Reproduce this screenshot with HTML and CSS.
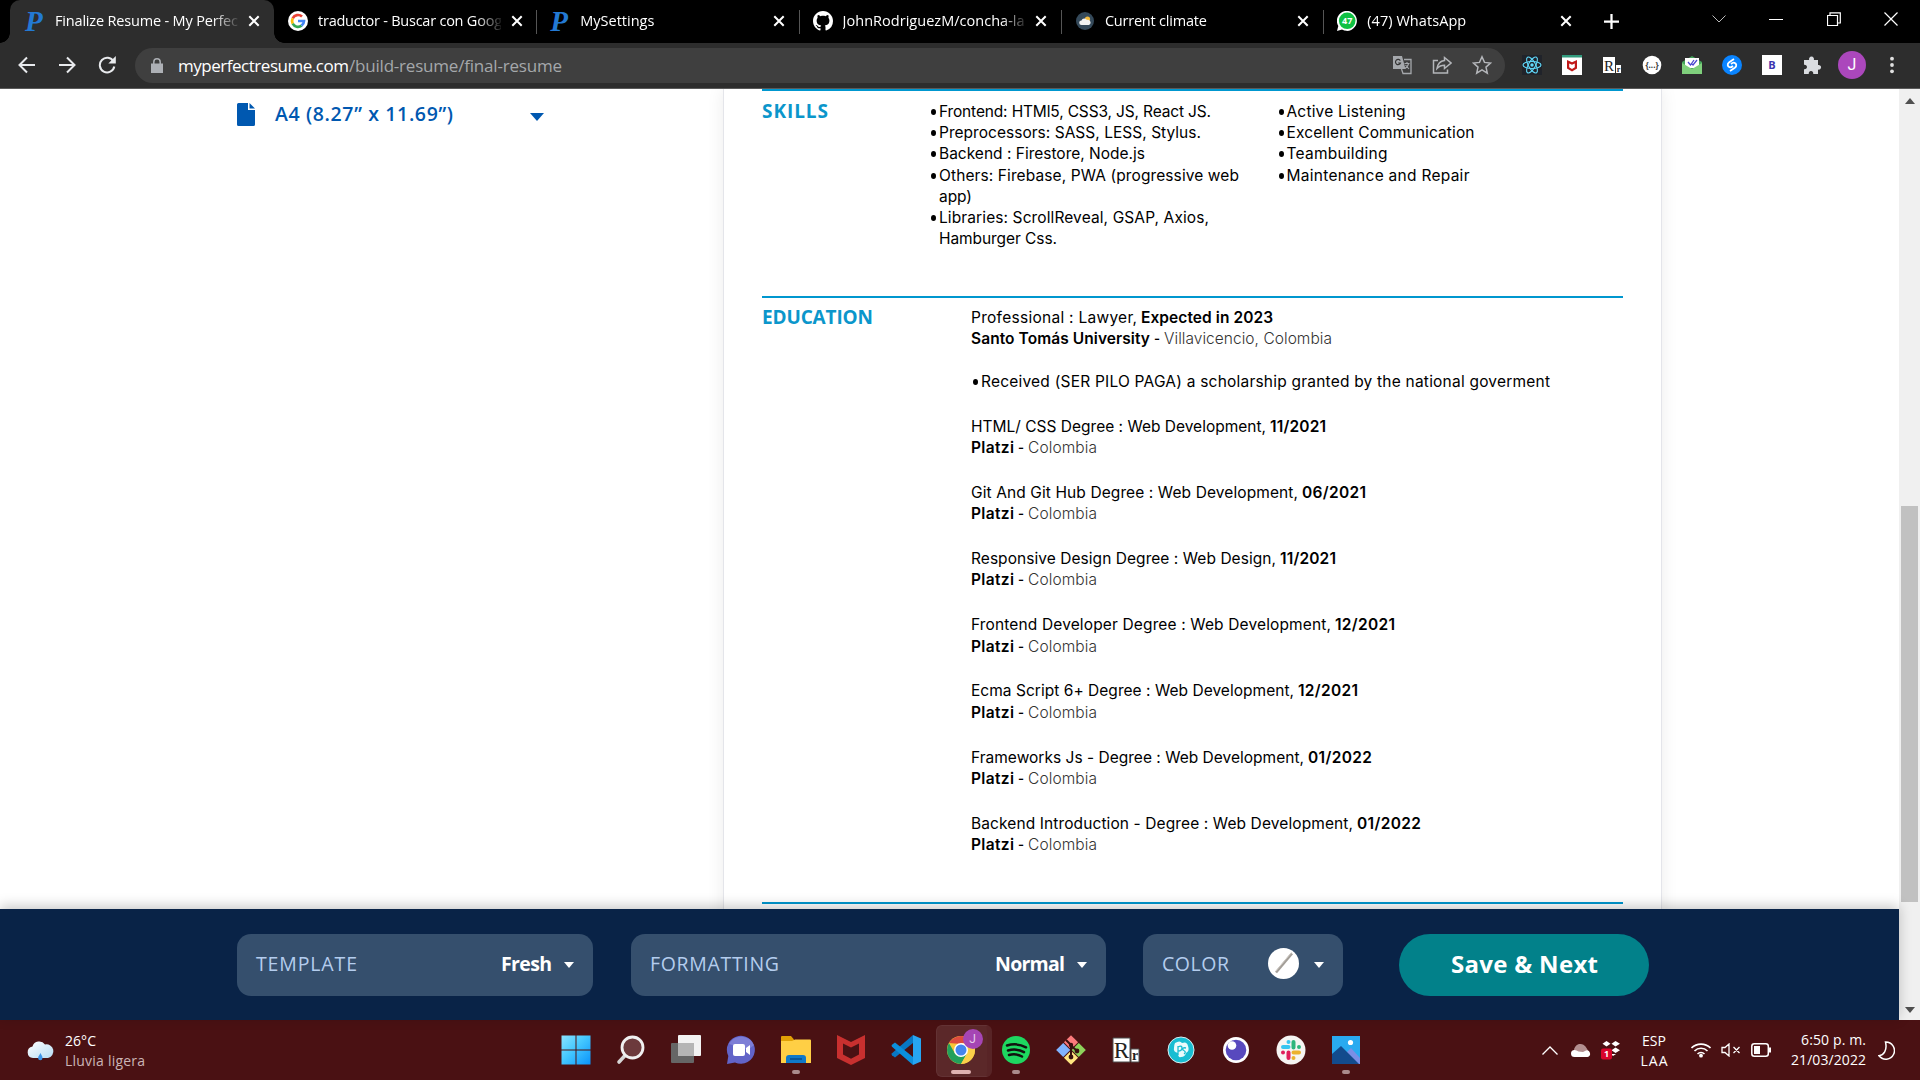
FILE: index.html
```html
<!DOCTYPE html>
<html lang="en">
<head>
<meta charset="utf-8">
<title>Finalize Resume - My Perfect Resume</title>
<link rel="stylesheet" href="styles.css">
</head>
<body>
<svg class="defs" width="0" height="0">
  <symbol id="x" viewBox="0 0 12 12"><path d="M1.3 1.3l9.4 9.4M10.7 1.3L1.3 10.7" stroke="#fff" stroke-width="2" fill="none"/></symbol>
  <symbol id="shield" viewBox="0 0 28 30"><path d="M0 0l14 7L28 0v23l-14 7-14-7zM6 8.500v11l8 4.200 8-4.200v-11l-8 4z" fill="#c8302f" fill-rule="evenodd"/></symbol>
</svg>
<div class="browser">
  <header class="tabs">
    <div class="tab active">
      <span class="fav pfav">P</span><span class="title"><span data-w="183">Finalize Resume - My Perfec</span></span><svg class="close"><use href="#x"/></svg>
    </div>
    <div class="tab nosep">
      <svg class="fav" viewBox="0 0 20 20"><circle cx="10" cy="10" r="10" fill="#fff"/><g fill="none" stroke-width="2.700"><path d="M14 5.500A6 6 0 0 0 4.700 7.300" stroke="#ea4335"/><path d="M4.700 7.300a6 6 0 0 0 0 5.400" stroke="#fbbc05"/><path d="M4.700 12.700A6 6 0 0 0 13.500 14.700" stroke="#34a853"/><path d="M13.500 14.700A6 6 0 0 0 16 10H10" stroke="#4285f4"/></g></svg>
      <span class="title"><span data-w="184">traductor - Buscar con Goog</span></span><svg class="close"><use href="#x"/></svg>
    </div>
    <div class="tab"><span class="fav pfav">P</span><span class="title"><span data-w="74">MySettings</span></span><svg class="close"><use href="#x"/></svg></div>
    <div class="tab">
      <svg class="fav" viewBox="0 0 16 16"><path fill="#fff" d="M8 0C3.580 0 0 3.580 0 8c0 3.540 2.290 6.530 5.470 7.590.4.070.55-.17.55-.38 0-.19-.01-.82-.01-1.490-2.010.37-2.530-.49-2.690-.94-.09-.23-.48-.94-.82-1.130-.28-.15-.68-.52-.01-.53.63-.01 1.080.58 1.230.82.72 1.210 1.870.87 2.330.66.070-.52.28-.87.51-1.070-1.780-.2-3.640-.89-3.640-3.950 0-.87.31-1.590.82-2.150-.08-.2-.36-1.020.08-2.120 0 0 .67-.21 2.200.82.64-.18 1.320-.27 2-.27s1.360.09 2 .27c1.530-1.040 2.200-.82 2.200-.82.44 1.100.16 1.920.08 2.120.51.56.82 1.270.82 2.150 0 3.070-1.870 3.750-3.650 3.950.29.25.54.73.54 1.480 0 1.070-.01 1.930-.01 2.200 0 .21.15.46.55.38A8 8 0 0 0 16 8c0-4.420-3.580-8-8-8z"/></svg>
      <span class="title"><span data-w="182">JohnRodriguezM/concha-la</span></span><svg class="close"><use href="#x"/></svg>
    </div>
    <div class="tab">
      <svg class="fav" viewBox="0 0 20 20"><circle cx="10" cy="10" r="9" fill="#34495a"/><circle cx="12.500" cy="8" r="2.600" fill="#f4bd3f"/><path d="M6.500 14a2.300 2.300 0 0 1 0-4.600 3 3 0 0 1 5.500-.4 2.700 2.700 0 0 1 2 5z" fill="#f2f2f2"/></svg>
      <span class="title"><span data-w="102">Current climate</span></span><svg class="close"><use href="#x"/></svg>
    </div>
    <div class="tab">
      <svg class="fav" viewBox="0 0 20 20"><path d="M0 20l1.300-5A10 10 0 1 1 5 18.600z" fill="#fff"/><circle cx="10.200" cy="9.800" r="8.300" fill="#0fc143"/><text x="10.200" y="13.400" class="wa">47</text></svg>
      <span class="title"><span data-w="99">(47) WhatsApp</span></span><svg class="close"><use href="#x"/></svg>
    </div>
    <svg class="plus" viewBox="0 0 16 16"><path d="M8 0v16M0 8h16" stroke="#fff" stroke-width="2.400"/></svg>
    <div class="winctl">
      <svg width="14" height="8" viewBox="0 0 14 8"><path d="M.5.500L7 7l6.500-6.500" fill="none" stroke="#bbb"/></svg>
      <svg width="14" height="14" viewBox="0 0 14 14"><path d="M0 7.500h14" stroke="#fff"/></svg>
      <svg width="14" height="14" viewBox="0 0 14 14"><path d="M.5 3.500h10v10H.5zM3 3V.800h10.300V11H11" fill="none" stroke="#fff" stroke-width="1.200"/></svg>
      <svg width="14" height="14" viewBox="0 0 14 14"><path d="M.5.500l13 13m0-13l-13 13" stroke="#fff" stroke-width="1.200"/></svg>
    </div>
  </header>
  <div class="toolbar">
    <nav class="nav">
      <svg width="18" height="18" viewBox="0 0 18 18"><path d="M17 9H2M9 1.500L1.500 9 9 16.500"/></svg>
      <svg width="18" height="18" viewBox="0 0 18 18"><path d="M1 9h15M9 1.500L16.500 9 9 16.500"/></svg>
      <svg width="18" height="18" viewBox="0 0 18 18"><path d="M15.500 5.500A7.300 7.300 0 1 0 16.300 10.500"/><path d="M17.800 0v7.500h-7.500z" fill="#e8eaed" stroke="none"/></svg>
    </nav>
    <div class="omnibox">
      <svg width="12" height="15" viewBox="0 0 12 15"><path d="M0 5.500h12V15H0z" fill="#adb0b5"/><path d="M2.800 6V4a3.200 3.200 0 0 1 6.400 0v2" fill="none" stroke="#adb0b5" stroke-width="1.500"/></svg>
      <span class="url"><span class="host" data-w="171">myperfectresume.com</span><span data-w="213">/build-resume/final-resume</span></span>
      <div class="omni-icons">
        <svg width="20" height="20" viewBox="0 0 20 20"><path d="M1 1h9l3.500 13H1z" fill="#a5a8ac"/><path d="M12 4.500h7V18.500h-8L9.500 14" fill="none" stroke="#a5a8ac" stroke-width="1.300"/><path d="M8.300 5.600A2.600 2.600 0 1 0 8.500 8H6.200" fill="none" stroke="#333" stroke-width="1.200"/><path d="M12.500 8.500h5M15 7v1.500M16.500 9c-.5 2-2 3.500-3.500 4.500M13.500 10l3.500 4" fill="none" stroke="#a5a8ac" stroke-width="1.100"/></svg>
        <svg width="20" height="20" viewBox="0 0 20 20"><path d="M6 5.500H1.500v12.500H15.500V14.500" class="ol"/><path d="M12.500 2.500l6.500 5.500-6.500 5.500v-3.200c-3.500 0-5.500 1-7.500 3.200.7-4.500 3.500-7.500 7.500-8z" class="ol"/></svg>
        <svg width="20" height="20" viewBox="0 0 20 20"><path d="M10 1.800l2.500 5.600 6 .6-4.500 4.100 1.300 6-5.300-3.200-5.300 3.200 1.300-6L1.500 8l6-.6z" class="ol"/></svg>
      </div>
    </div>
    <div class="exts">
      <svg viewBox="0 0 20 20"><path fill="#20232a" d="M0 0h20v20H0z"/><g fill="none" stroke="#61dafb" stroke-width="1.100"><ellipse cx="10" cy="10" rx="9" ry="3.500"/><ellipse cx="10" cy="10" rx="9" ry="3.500" transform="rotate(60 10 10)"/><ellipse cx="10" cy="10" rx="9" ry="3.500" transform="rotate(120 10 10)"/></g><circle cx="10" cy="10" r="1.700" fill="#61dafb"/></svg>
      <svg viewBox="0 0 20 20"><path fill="#fff" d="M0 0h20v20H0z"/><path fill="#319b7d" d="M0 0h20v2.500H0z"/><path d="M5 5l5 2.200L15 5v8.500l-5 3-5-3zM7.200 8.500v3.800l2.800 1.600 2.800-1.600V8.500L10 9.800z" fill="#c01818" fill-rule="evenodd"/></svg>
      <svg viewBox="0 0 20 20"><path fill="#fff" d="M1 2h12v16H1zM14 10h5v8h-5z"/><text x="7" y="15.500" class="rr">R</text><text x="16.500" y="17" class="rs">r</text></svg>
      <svg viewBox="0 0 20 20"><circle cx="10" cy="10" r="9.300" fill="#fff"/><text x="10" y="13" class="br">{...}</text></svg>
      <svg viewBox="0 0 20 20"><path d="M0 7l10-6 10 6v11.500H0z" fill="#45a35b"/><path d="M3 3h14v10H3z" fill="#fff"/><path d="M0 8l10 6 10-6v11H0z" fill="#7fcf7c"/><path d="M6 7l2.500 3 3.500-5M10 9l1 1 4-5" fill="none" stroke="#4b46d0" stroke-width="1.300"/></svg>
      <svg viewBox="0 0 20 20"><circle cx="10" cy="10" r="10" fill="#0a84ff"/><path d="M12 4L7.200 7.200c-2.400 1.700-1.600 4.300.3 5 1.300.4 2.300-.2 3.500-1.200M8 16l4.800-3.200c2.400-1.700 1.600-4.300-.3-5-1.300-.4-2.300.2-3.500 1.200" fill="none" stroke="#fff" stroke-width="1.800"/></svg>
      <svg viewBox="0 0 20 20"><path fill="#fff" d="M0 0h20v20H0z"/><text x="10" y="14" class="bb">B</text></svg>
      <svg viewBox="0 0 20 20"><path fill="#dadce0" d="M2 5h5.200a2.500 2.500 0 1 1 4.600 0H16v5a2.400 2.400 0 1 1 0 4.600V19h-4.800a2.300 2.300 0 1 0-4.400 0H2v-4.800a2.300 2.300 0 1 0 0-4.400z"/></svg>
      <span class="avatar">J</span>
      <svg viewBox="0 0 20 20"><g fill="#e0e0e0"><circle cx="10" cy="3.700" r="1.900"/><circle cx="10" cy="10" r="1.900"/><circle cx="10" cy="16.300" r="1.900"/></g></svg>
    </div>
  </div>
  <div class="viewport">
    <main class="page">
      <div class="content">
        <aside class="side">
          <svg width="18" height="23" viewBox="0 0 18 23"><path fill="#0058b0" d="M0 1.500Q0 0 1.500 0H11v7h7v14.500q0 1.500-1.500 1.500h-15Q0 23 0 21.500zM12.500 0L18 5.600h-5.500z"/></svg>
          <span class="size" data-w="178">A4 (8.27” x 11.69”)</span>
          <svg class="caret" width="14" height="8" viewBox="0 0 14 8"><path fill="#0058b0" d="M0 0h14L7 8z"/></svg>
        </aside>
        <article class="sheet">
          <section class="skills">
            <h2><span data-w="66">SKILLS</span></h2>
            <ul>
              <li><span data-w="272">Frontend: HTMl5, CSS3, JS, React JS.</span></li>
              <li><span data-w="262">Preprocessors: SASS, LESS, Stylus.</span></li>
              <li><span data-w="206">Backend : Firestore, Node.js</span></li>
              <li><span data-w="300">Others: Firebase, PWA (progressive web</span><br><span data-w="33">app)</span></li>
              <li><span data-w="270">Libraries: ScrollReveal, GSAP, Axios,</span><br><span data-w="118">Hamburger Css.</span></li>
            </ul>
            <ul>
              <li><span data-w="119">Active Listening</span></li>
              <li><span data-w="188">Excellent Communication</span></li>
              <li><span data-w="101">Teambuilding</span></li>
              <li><span data-w="183">Maintenance and Repair</span></li>
            </ul>
          </section>
          <section class="education">
            <h2><span data-w="111">EDUCATION</span></h2>
            <div class="entries">
              <div class="entry">
                <p><span data-w="166">Professional : Lawyer,</span> <b data-w="132">Expected in 2023</b></p>
                <p><b data-w="179">Santo Tomás University</b> <b class="dash">-</b> <i data-w="168">Villavicencio, Colombia</i></p>
                <ul><li><span data-w="569">Received (SER PILO PAGA) a scholarship granted by the national goverment</span></li></ul>
              </div>
              <div class="entry"><p><span data-w="295">HTML/ CSS Degree : Web Development,</span> <b data-w="56">11/2021</b></p><p><b data-w="43">Platzi</b> <b class="dash">-</b> <i data-w="69">Colombia</i></p></div>
              <div class="entry"><p><span data-w="327">Git And Git Hub Degree : Web Development,</span> <b data-w="64">06/2021</b></p><p><b data-w="43">Platzi</b> <b class="dash">-</b> <i data-w="69">Colombia</i></p></div>
              <div class="entry"><p><span data-w="305">Responsive Design Degree : Web Design,</span> <b data-w="56">11/2021</b></p><p><b data-w="43">Platzi</b> <b class="dash">-</b> <i data-w="69">Colombia</i></p></div>
              <div class="entry"><p><span data-w="360">Frontend Developer Degree : Web Development,</span> <b data-w="60">12/2021</b></p><p><b data-w="43">Platzi</b> <b class="dash">-</b> <i data-w="69">Colombia</i></p></div>
              <div class="entry"><p><span data-w="323">Ecma Script 6+ Degree : Web Development,</span> <b data-w="60">12/2021</b></p><p><b data-w="43">Platzi</b> <b class="dash">-</b> <i data-w="69">Colombia</i></p></div>
              <div class="entry"><p><span data-w="333">Frameworks Js - Degree : Web Development,</span> <b data-w="64">01/2022</b></p><p><b data-w="43">Platzi</b> <b class="dash">-</b> <i data-w="69">Colombia</i></p></div>
              <div class="entry"><p><span data-w="382">Backend Introduction - Degree : Web Development,</span> <b data-w="64">01/2022</b></p><p><b data-w="43">Platzi</b> <b class="dash">-</b> <i data-w="69">Colombia</i></p></div>
            </div>
          </section>
          <section></section>
        </article>
      </div>
      <footer class="actions">
        <div class="pill template"><label><span data-w="101">TEMPLATE</span></label><strong><span data-w="51">Fresh</span></strong><svg class="tri" viewBox="0 0 10 6"><path d="M0 0h10L5 6z"/></svg></div>
        <div class="pill formatting"><label><span data-w="129">FORMATTING</span></label><strong><span data-w="70">Normal</span></strong><svg class="tri" viewBox="0 0 10 6"><path d="M0 0h10L5 6z"/></svg></div>
        <div class="pill color"><label><span data-w="67">COLOR</span></label><svg class="swatch" viewBox="0 0 31 31"><circle cx="15.500" cy="15.500" r="15.500" fill="#fff"/><path d="M8 24.500L24 5.500" stroke="#a39e98" stroke-width="2.600"/><path d="M7.500 23.500L23.500 4.500" stroke="#cfcac4"/></svg><svg class="tri" viewBox="0 0 10 6"><path d="M0 0h10L5 6z"/></svg></div>
        <button class="save"><span data-w="147">Save &amp; Next</span></button>
      </footer>
    </main>
    <div class="scroll">
      <svg width="10" height="6" viewBox="0 0 10 6"><path d="M0 6h10L5 0z" fill="#505050"/></svg>
      <div class="thumb"></div>
      <svg width="10" height="6" viewBox="0 0 10 6"><path d="M0 0h10L5 6z" fill="#505050"/></svg>
    </div>
  </div>
</div>
<div class="taskbar">
  <div class="weather">
    <svg width="28" height="22" viewBox="0 0 28 22"><defs><linearGradient id="cl" x2="1" y2="1"><stop stop-color="#fff"/><stop offset="1" stop-color="#b5dcf4"/></linearGradient></defs><path d="M6 18a5.800 5.800 0 0 1-.5-11.500A7 7 0 0 1 18 4.500a6.800 6.800 0 1 1 3 13.500z" fill="url(#cl)"/><path d="M13.500 13c1 2 2 3.500 2 5a2.200 2.200 0 0 1-4.400 0c0-1.500 1.400-3 2.400-5z" fill="#3d94e8"/></svg>
    <div><div data-w="31">26°C</div><div class="dim" data-w="80">Lluvia ligera</div></div>
  </div>
  <div class="apps">
    <div class="app"><svg viewBox="0 0 30 30"><defs><linearGradient id="wn" x2="1" y2="1"><stop stop-color="#8be3ff"/><stop offset=".45" stop-color="#45c8ff"/><stop offset="1" stop-color="#0a93fa"/></linearGradient></defs><path fill="url(#wn)" d="M.5.500h14v14H.5zM15.500.500h14v14h-14zM.5 15.500h14v14H.5zM15.500 15.500h14v14h-14z"/></svg></div>
    <div class="app"><svg viewBox="0 0 30 30"><path d="M9.500 20L3 27" stroke="#d6d6d6" stroke-width="3.600" stroke-linecap="round"/><circle cx="16.500" cy="12.500" r="10.500" fill="#6c3a3c" stroke="#f0f0f0" stroke-width="2.800"/></svg></div>
    <div class="app"><svg viewBox="0 0 30 30"><rect y="8" width="23" height="20" rx="1" fill="#666"/><rect x="7" y="0" width="23" height="21" rx="1" fill="#f2f2f2"/><path d="M7 8h16v13H7z" fill="#b5b5b5"/></svg></div>
    <div class="app"><svg viewBox="0 0 30 30"><path d="M1 29l1.300-8A14 14 0 1 1 9 27.500z" fill="#6264c8"/><path d="M3 9A14 14 0 0 1 28 10l-6 5z" fill="#8f8fe0" opacity=".6"/><rect x="7" y="9" width="12" height="12" rx="2" fill="#fff"/><path d="M20 13l4-3v10l-4-3z" fill="#fff"/></svg></div>
    <div class="app open"><svg viewBox="0 0 30 30"><path d="M0 2q0-1 1-1h9l3 3.500V9H0z" fill="#e0a106"/><path d="M0 6h11l3-1.500h15q1 0 1 1V28H0z" fill="#ffcf45"/><path d="M5 28v-5q0-3 3-3h14q3 0 3 3v5z" fill="#0f79c9"/><path d="M9 24h12" stroke="#064c8d" stroke-width="1.500"/></svg></div>
    <div class="app"><svg viewBox="-1 0 30 30"><use href="#shield" width="28" height="30"/></svg></div>
    <div class="app"><svg viewBox="0 0 30 30"><path d="M22 0v8L4 22.500l-3-2.300q-1-1 0-2z" fill="#0877c4"/><path d="M22 30v-8L4 7.500 1 9.800q-1 1 0 2z" fill="#0b8fdc"/><path d="M22 0l8 3.500v23L22 30z" fill="#27a5f2"/></svg></div>
    <div class="app open current"><svg viewBox="0 0 30 30"><circle cx="15" cy="15" r="14" fill="#f9c637"/><path d="M2.900 8A14 14 0 0 1 27.100 8L15 9z" fill="#dd4b3e"/><path d="M2.900 8A14 14 0 0 0 15 29l6-10.500-12 0z" fill="#22a05b"/><path d="M15 8h12.100a14 14 0 0 1-12.100 21l6-10.500z" fill="#fbd04a"/><circle cx="15" cy="15" r="7" fill="#fff"/><circle cx="15" cy="15" r="5.500" fill="#4485ee"/></svg><span class="badge">J</span></div>
    <div class="app open"><svg viewBox="0 0 30 30"><circle cx="15" cy="15" r="14" fill="#1ed760"/><path d="M6 10.500q10-3 19 1.800M7 15.500q8.500-2.500 16 1.700M8 20q7-2 13 1.500" fill="none" stroke="#11120f" stroke-width="2.500" stroke-linecap="round"/></svg></div>
    <div class="app"><svg viewBox="0 0 30 30"><g transform="rotate(45 15 15)"><path fill="#fb7a7c" d="M4.500 4.500h10v10h-10z"/><path fill="#80b3ff" d="M4.500 15.500h10v10h-10z"/><path fill="#8ed35b" d="M15.500 4.500h10v10h-10z"/><path fill="#ffe680" d="M15.500 15.500h10v10h-10z"/></g><path d="M10 5l5 5v12M15 10.500l6 5.500" fill="none" stroke="#381010" stroke-width="2"/><g fill="#381010"><circle cx="15" cy="10" r="2.200"/><circle cx="15" cy="22" r="2.400"/><circle cx="21" cy="16" r="2.400"/></g></svg></div>
    <div class="app"><svg viewBox="0 0 30 30"><path fill="#fff" stroke="#4d4d4d" d="M2 3h17v24H2zM20 14h8v13h-8z"/><text x="10.500" y="23" class="rr big">R</text><text x="24" y="25" class="rs big">r</text></svg></div>
    <div class="app"><svg viewBox="0 0 30 30"><circle cx="15" cy="15" r="13" fill="#18bdd2" stroke="#dceff1"/><path d="M9 8q5-3 7 0 5-2 6 3 2 5-2 7-1 4-5 4-3 1-3-4-5-1-4-5 0-3 1-5z" fill="#eafafb"/><path d="M12 11v9M12 12q4-2 4 1t-4 3M20 13q-4-1-3 2 4 2 1 4" fill="none" stroke="#18bdd2" stroke-width="1.300"/></svg></div>
    <div class="app"><svg viewBox="0 0 30 30"><circle cx="15" cy="15" r="13" fill="#fff"/><circle cx="15" cy="15" r="10.300" fill="#5849be"/><circle cx="11" cy="10.500" r="4.300" fill="#fff"/></svg></div>
    <div class="app"><svg viewBox="0 0 30 30"><circle cx="15" cy="15" r="14.500" fill="#f6f5f3"/><g stroke-width="4" stroke-linecap="round" fill="none"><path d="M7 12h5.500M12.500 7v0" stroke="#36c5f0"/><path d="M17.500 7v5.500M23 12h0" stroke="#2eb67d"/><path d="M17.500 17.500H23M17.500 23v0" stroke="#ecb22e"/><path d="M12.500 17.500V23M7 17.500h0" stroke="#e01e5a"/></g></svg></div>
    <div class="app open"><svg viewBox="0 0 30 30"><path fill="#29aaf0" d="M1 1h28v28H1z"/><path d="M16 17l4-4 9 10v6H16z" fill="#7a8fe6"/><path d="M1 19l9-8 18 18H1z" fill="#134b8d"/><circle cx="19.500" cy="7.500" r="2.600" fill="#fff"/></svg></div>
  </div>
  <div class="tray">
    <svg class="t-chev" width="16" height="9" viewBox="0 0 16 9"><path d="M.5 8.500L8 1l7.500 7.500" fill="none" stroke="#fff" stroke-width="1.300"/></svg>
    <svg class="t-cloud" width="20" height="14" viewBox="0 0 20 14"><path d="M3 8a6.500 6.500 0 0 1 12.500-3l3 5H2z" fill="#b38f90"/><path d="M3.500 14a3.500 3.500 0 0 1 0-7q2 0 4 1.500L12 9l3-1.500a3.300 3.300 0 0 1 1.500 6.500z" fill="#fff"/></svg>
    <svg class="t-drop" width="20" height="20" viewBox="0 0 20 20"><path d="M5.500 1l4 2.700-4 2.700-4-2.700zM14.500 1l4.500 2.700-4.500 2.700-4-2.700zM14.500 7.500l4.500 2.700-4.500 2.700-4-2.700zM10 14h5l-3 2z" fill="#fff"/><rect y="8.500" width="11" height="11" rx="2" fill="#d9042b"/><text x="5.500" y="17.300" class="one">1</text></svg>
    <div class="lang"><div data-w="24">ESP</div><div data-w="27">LAA</div></div>
    <svg class="t-wifi" width="20" height="16" viewBox="0 0 20 16"><g fill="none" stroke="#fff" stroke-width="1.600"><path d="M.5 6a13.500 13.500 0 0 1 19 0M3.500 9a9.200 9.200 0 0 1 13 0M6.500 12a5 5 0 0 1 7 0"/></g><circle cx="10" cy="13.700" r="1.900" fill="#fff"/></svg>
    <svg class="t-vol" width="20" height="14" viewBox="0 0 20 14"><path d="M1 4.500h3L8 1v12L4 9.500H1zM12.500 4l6 6M18.500 4l-6 6" fill="none" stroke="#fff" stroke-width="1.300"/></svg>
    <svg class="t-bat" width="20" height="14" viewBox="0 0 20 14"><rect x=".8" y=".8" width="16.500" height="12.400" rx="2.500" fill="none" stroke="#fff" stroke-width="1.500"/><path d="M3 3h6v8H3zM18 4.500h2v5h-2z" fill="#fff"/></svg>
    <div class="clock"><div data-w="65">6:50 p. m.</div><div data-w="75">21/03/2022</div></div>
    <svg class="t-moon" width="17" height="19" viewBox="0 0 17 19"><path d="M7.500 1A8.600 8.600 0 1 1 1 14.800C5.500 14.500 9.500 9.500 7.500 1z" fill="none" stroke="#fff" stroke-width="1.500"/></svg>
  </div>
</div>
<script src="fit.js"></script>
</body>
</html>
```
FILE: styles.css
```css
* { box-sizing: border-box; }
body { margin: 0; width: 1920px; height: 1080px; overflow: hidden; background: #fff; font-family: "Open Sans", "Noto Sans", sans-serif; }
svg { display: block; flex: none; }
.defs { position: absolute; }
[data-w] { white-space: nowrap; }

.browser { height: 1020px; display: flex; flex-direction: column; }
.tabs { height: 43px; background: #000; display: flex; align-items: center; padding-left: 10px; flex: none; }
.tab { position: relative; width: 262.3px; height: 43px; display: flex; align-items: center; padding: 0 14px 2px 14px; color: #fff; font-size: 14.5px; flex: none; }
.tab:not(.active):not(.nosep)::before { content: ""; position: absolute; left: 0; top: 10px; width: 1px; height: 24px; background: #555; }
.tab.active { width: 264px; background: #2d2d2d; border-radius: 10px 10px 0 0; padding-left: 15px; }
.tab.active::before, .tab.active::after { content: ""; position: absolute; bottom: 0; width: 10px; height: 10px; }
.tab.active::before { left: -10px; background: radial-gradient(circle at 0 0, #000 9.500px, #2d2d2d 10px); }
.tab.active::after { right: -10px; background: radial-gradient(circle at 100% 0, #000 9.500px, #2d2d2d 10px); }
.fav { width: 20px; height: 20px; margin-right: 10px; flex: none; }
.pfav { font: italic bold 29px/20px "Liberation Serif", serif; color: #2379d3; }
.title { width: 183px; overflow: hidden; white-space: nowrap; margin-right: 9.500px; flex: none; -webkit-mask-image: linear-gradient(90deg, #000 158px, transparent 186px); mask-image: linear-gradient(90deg, #000 158px, transparent 186px); }
.close { width: 12px; height: 12px; }
.plus { width: 15px; height: 15px; margin-left: 19px; }
.winctl { margin-left: auto; padding: 0 22px 5px 0; display: flex; align-items: center; gap: 43.500px; }
.wa { font: bold 9px "Open Sans", sans-serif; fill: #fff; text-anchor: middle; }

.toolbar { height: 46px; background: #2d2d2d; border-bottom: 1px solid #5a5a5a; display: flex; align-items: center; flex: none; padding: 0 0 1px 18px; }
.nav { display: flex; gap: 22px; width: 117px; }
.nav svg { fill: none; stroke: #e8eaed; stroke-width: 2; }
.omnibox { width: 1370px; height: 35px; border-radius: 18px; background: #3f3f3f; display: flex; align-items: center; padding: 0 13px 0 16px; }
.url { margin-left: 15px; font-size: 17px; color: #a5a8ab; display: flex; }
.host { color: #fff; }
.omni-icons { margin-left: auto; display: flex; gap: 20px; }
.ol { fill: none; stroke: #b4b6ba; stroke-width: 1.500; }
.exts { display: flex; align-items: center; gap: 20px; padding-left: 17px; }
.exts > svg { width: 20px; height: 20px; }
.avatar { width: 28px; height: 28px; margin: 0 -4px; border-radius: 50%; background: #ab47bc; color: #fff; font: 16px/28px Roboto, sans-serif; text-align: center; }
.rr { font: 15px "Liberation Serif", serif; fill: #222; text-anchor: middle; }
.rs { font: bold 8px "Liberation Serif", serif; fill: #222; text-anchor: middle; }
.rr.big { font-size: 23px; }
.rs.big { font-size: 14px; }
.br { font: bold 8px "Open Sans", sans-serif; fill: #333; text-anchor: middle; }
.bb { font: bold 11px "Open Sans", sans-serif; fill: #3b35b0; text-anchor: middle; }

.viewport { height: 931px; display: flex; }
.page { width: 1899px; display: flex; flex-direction: column; }
.content { height: 820px; overflow: hidden; display: flex; }
.side { width: 723px; height: 50px; display: flex; align-items: center; padding-left: 237px; color: #0058b0; font-size: 19.500px; font-weight: 600; }
.size { width: 256px; margin: -2px 0 0 20px; }
.side .caret { margin-top: 5px; }
.sheet { width: 939px; height: 840px; padding-left: 38px; border: solid #e4e5ea; border-width: 0 1px; box-shadow: 0 0 16px rgba(0,0,0,.08); color: #000; font: 15.500px/21.170px "Inter", sans-serif; flex: none; }
.sheet section { width: 861px; border-top: 2px solid #0097cf; display: flex; }
.sheet h2 { margin: 0; font: 700 19px/21px "Open Sans", sans-serif; color: #0b96cb; flex: none; }
.skills { height: 207px; padding-top: 10px; }
.skills h2 { width: 177px; }
.skills ul { width: 347.500px; flex: none; }
.education { height: 606px; padding-top: 9px; }
.education h2 { width: 209px; }
ul { list-style: none; margin: 0; padding: 0; }
li { position: relative; }
li::before { content: ""; position: absolute; left: -8px; top: 8px; width: 5px; height: 6px; border-radius: 50%; background: #000; }
.entry { margin-bottom: 23.800px; }
.entry p { margin: 0; display: flex; gap: 4px; white-space: nowrap; }
.entry ul { margin-top: 21.600px; padding-left: 10px; }
.entry b { font-weight: 600; }
.entry .dash { width: 6px; font-size: 13px; }
.entry i { font-style: normal; font-weight: 300; color: #333; }

.actions { position: relative; height: 111px; background: #092347; box-shadow: 0 -3px 12px rgba(0,0,0,.22); display: flex; align-items: center; padding: 1px 0 0 237px; }
.pill { height: 62px; border-radius: 14px; background: #354f6d; display: flex; align-items: center; padding: 0 19px 3px; font-size: 19.500px; flex: none; }
.pill label { color: #b4cdee; margin-right: auto; }
.pill strong { color: #fff; margin-right: 12px; }
.template { width: 356px; margin-right: 38px; }
.formatting { width: 475px; margin-right: 37px; }
.color { width: 200px; margin-right: 56px; }
.tri { width: 10px; height: 6px; fill: #fff; margin-top: 3px; }
.swatch { width: 31px; height: 31px; margin-right: 15px; }
.save { width: 250px; height: 62px; border: 0; border-radius: 31px; background: #02818a; color: #fff; font: 700 24px "Open Sans", sans-serif; padding: 0 6px 4px 7px; }
.scroll { width: 21px; background: #f0f0f0; display: flex; flex-direction: column; align-items: center; padding: 9px 0 7px; }
.thumb { width: 17px; height: 396px; margin: 402px 0 auto; background: #c1c1c1; }

.taskbar { height: 60px; background: #4a1113; display: flex; align-items: center; color: #fff; font-size: 14px; line-height: 20px; }
.weather { width: 548.500px; padding: 1px 0 0 27px; display: flex; align-items: center; gap: 10px; }
.weather div div { width: max-content; }
.dim { color: #cbb5b6; }
.apps { display: flex; }
.app { position: relative; width: 55px; height: 60px; display: flex; align-items: center; justify-content: center; }
.app svg { width: 30px; height: 30px; position: relative; }
.open::after { content: ""; position: absolute; bottom: 6px; left: 23.500px; width: 8px; height: 4px; border-radius: 2px; background: #ab8b8c; }
.current::before { content: ""; position: absolute; left: 2px; top: 5px; width: 50px; height: 50px; border: 1px solid #633234; border-right-width: 5px; border-right-color: #582426; border-radius: 6px; background: #5b2829; }
.current::after { width: 20px; left: 17.500px; background: #dfb2b1; }
.badge { position: absolute; left: 29px; top: 9px; width: 20px; height: 20px; border-radius: 50%; background: #a545b4; color: #e6cbea; text-align: center; font: 12px/20px Roboto, sans-serif; }
.tray { margin-left: auto; padding-right: 25px; display: flex; align-items: center; }
.t-cloud { margin-left: 13px; }
.t-drop { margin-left: 10px; }
.lang { width: 28px; margin: 0 23px 0 19px; padding-top: 1px; text-align: center; }
.t-vol { margin: 0 10px; }
.clock { width: 76px; margin: 0 12px 0 19px; text-align: right; }
.one { font: bold 9px "Open Sans", sans-serif; fill: #fff; text-anchor: middle; }
```
FILE: fit.js
```js
// Track each label to its design width.
document.querySelectorAll('[data-w]').forEach(function (el) {
  var range = document.createRange();
  range.selectNodeContents(el);
  var natural = range.getBoundingClientRect().width;
  var n = el.textContent.length;
  var ls = (parseFloat(el.dataset.w) - natural) / (n - 1);
  el.style.letterSpacing = ls.toFixed(3) + 'px';
  el.style.marginRight = (-ls).toFixed(3) + 'px';
});
```
